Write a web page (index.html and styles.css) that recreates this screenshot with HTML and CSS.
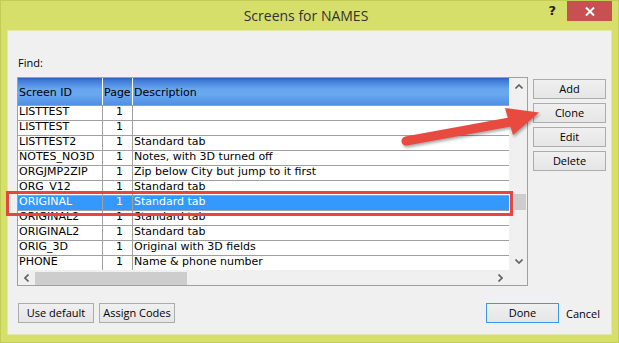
FILE: index.html
```html
<!DOCTYPE html>
<html lang="en">
<head>
  <meta charset="UTF-8">
  <title>Screens for NAMES</title>
  <link rel="stylesheet" href="styles.css">
</head>
<body>

  <div class="window">
    <div class="titlebar">
      <span class="title">Screens for NAMES</span>
      <div class="controls">
        <span class="help">?</span>
        <span class="close">
          <svg width="10" height="9" viewBox="0 0 10 9"><path d="M1 0.5 L9 8.5 M9 0.5 L1 8.5" stroke="#fff" stroke-width="2"/></svg>
        </span>
      </div>
    </div>

    <div class="client">
      <div class="find">Find:</div>

      <div class="main">
        <div class="listbox">
          <div class="table">
            <div class="head">
              <div class="c1">Screen ID</div>
              <div class="c2">Page</div>
              <div class="c3">Description</div>
            </div>
            <div class="row"><div class="c1">LISTTEST</div><div class="c2">1</div><div class="c3"></div></div>
            <div class="row"><div class="c1">LISTTEST</div><div class="c2">1</div><div class="c3"></div></div>
            <div class="row"><div class="c1">LISTTEST2</div><div class="c2">1</div><div class="c3">Standard tab</div></div>
            <div class="row"><div class="c1">NOTES_NO3D</div><div class="c2">1</div><div class="c3">Notes, with 3D turned off</div></div>
            <div class="row"><div class="c1">ORGJMP2ZIP</div><div class="c2">1</div><div class="c3">Zip below City but jump to it first</div></div>
            <div class="row"><div class="c1">ORG_V12</div><div class="c2">1</div><div class="c3">Standard tab</div></div>
            <div class="row sel"><div class="c1">ORIGINAL</div><div class="c2">1</div><div class="c3">Standard tab</div></div>
            <div class="row"><div class="c1">ORIGINAL2</div><div class="c2">1</div><div class="c3">Standard tab</div></div>
            <div class="row"><div class="c1">ORIGINAL2</div><div class="c2">1</div><div class="c3">Standard tab</div></div>
            <div class="row"><div class="c1">ORIG_3D</div><div class="c2">1</div><div class="c3">Original with 3D fields</div></div>
            <div class="row"><div class="c1">PHONE</div><div class="c2">1</div><div class="c3">Name &amp; phone number</div></div>
          </div>

          <div class="vscroll">
            <div class="arrow-v">
              <svg width="8" height="5" viewBox="0 0 8 5"><polyline points="0.5,4.5 4,1 7.5,4.5" fill="none" stroke="#606060" stroke-width="1.6"/></svg>
            </div>
            <div class="vtrack"><div class="vthumb"></div></div>
            <div class="arrow-v">
              <svg width="8" height="5" viewBox="0 0 8 5"><polyline points="0.5,0.5 4,4 7.5,0.5" fill="none" stroke="#606060" stroke-width="1.6"/></svg>
            </div>
          </div>

          <div class="hscroll">
            <div class="arrow-h">
              <svg width="5" height="8" viewBox="0 0 5 8"><polyline points="4.5,0.5 1,4 4.5,7.5" fill="none" stroke="#606060" stroke-width="1.6"/></svg>
            </div>
            <div class="hthumb"></div>
            <div class="htrack"></div>
            <div class="arrow-h">
              <svg width="5" height="8" viewBox="0 0 5 8"><polyline points="0.5,0.5 4,4 0.5,7.5" fill="none" stroke="#606060" stroke-width="1.6"/></svg>
            </div>
          </div>
          <div class="corner"></div>
        </div>

        <div class="side">
          <button class="btn">Add</button>
          <button class="btn">Clone</button>
          <button class="btn">Edit</button>
          <button class="btn">Delete</button>
        </div>
      </div>

      <div class="footer">
        <button class="btn wide">Use default</button>
        <button class="btn wide">Assign Codes</button>
        <button class="btn done">Done</button>
        <button class="flat">Cancel</button>
      </div>
    </div>

    <!-- annotation drawn over the dialog -->
    <svg class="annot" width="619" height="343" viewBox="0 0 619 343">
      <rect x="7.5" y="192.5" width="504" height="22" fill="none" stroke="#e8463d" stroke-width="3"/>
      <g class="arrow">
        <line x1="406" y1="141" x2="510" y2="122" stroke="#e84a3f" stroke-width="9" stroke-linecap="round"/>
        <polygon points="505,108 539,112.5 513,135" fill="#e84a3f"/>
      </g>
    </svg>
  </div>

</body>
</html>
```

FILE: styles.css
```css
* {
  box-sizing: border-box;
}

html, body {
  margin: 0;
  background: #d5df69;
}

body {
  width: 619px;
  height: 343px;
  overflow: hidden;
  font-family: "Open Sans", "Noto Sans", sans-serif;
}

.window {
  position: relative;
  width: 619px;
  height: 343px;
  background: #d5df69;
  box-shadow: inset 0 0 0 1px #c3cd55;
}

/* title bar */
.titlebar {
  height: 30px;
  display: grid;
  grid-template-columns: 1fr auto 1fr;
  padding-right: 7px;
}

.title {
  grid-column: 2;
  font-size: 14px;
  line-height: 31px;
  color: #333;
}

.controls {
  grid-column: 3;
  justify-self: end;
  display: flex;
  align-items: flex-start;
}

.help {
  font-family: "DejaVu Sans", sans-serif;
  font-weight: bold;
  font-size: 13px;
  line-height: 14px;
  color: #222;
  margin-top: 4px;
  margin-right: 11px;
}

.close {
  width: 45px;
  height: 20px;
  margin-top: 1px;
  background: #c75050;
  display: flex;
  align-items: center;
  justify-content: center;
}

/* dialog body */
.client {
  margin: 0 7px;
  height: 305px;
  background: #f0f0f0;
  border: 1px solid #e3e8a6;
  padding: 0 5px 0 9px;
  display: flex;
  flex-direction: column;
}

.find {
  margin-top: 25px;
  height: 14px;
  line-height: 14px;
  font-size: 11px;
  padding-left: 1px;
  color: #000;
}

.main {
  margin-top: 7px;
  display: flex;
  gap: 5px;
}

/* list box */
.listbox {
  width: 511px;
  height: 209px;
  border: 1px solid #a0a0a0;
  background: #fff;
  display: grid;
  grid-template-columns: 491px 18px;
  grid-template-rows: 192px 15px;
}

.table {
  overflow: hidden;
  font-family: "DejaVu Sans", sans-serif;
  font-size: 11px;
  color: #000;
}

.head {
  height: 27px;
  display: flex;
  align-items: stretch;
  background: linear-gradient(to bottom, #2a5cc4 0, #3f78d6 8%, #67a5ee 40%, #6aa8ef 60%, #4f8fe4 100%);
}

.head > div {
  display: flex;
  align-items: center;
  padding-top: 1px;
}

.head .c1,
.head .c2 {
  border-right: 1px solid #fff;
}

.head .c2 {
  justify-content: flex-start;
  padding-left: 1px;
}

.row {
  height: 15px;
  border-top: 1px solid #a0a0a0;
  display: flex;
  line-height: 12px;
  white-space: nowrap;
}

.c1 {
  width: 85px;
  padding-left: 1px;
  flex-shrink: 0;
}

.c2 {
  width: 30px;
  flex-shrink: 0;
}

.c3 {
  flex: 1;
  padding-left: 1px;
}

.row .c1,
.row .c2 {
  border-right: 1px solid #a0a0a0;
}

.row .c2 {
  text-align: center;
  padding-left: 4px;
}

.row.sel {
  background: #3399ff;
  color: #fff;
}

/* scroll bars */
.vscroll {
  grid-column: 2;
  grid-row: 1;
  background: #f0f0f0;
  display: flex;
  flex-direction: column;
}

.arrow-v {
  height: 17px;
  display: flex;
  align-items: center;
  justify-content: center;
  padding-left: 1px;
}

.vtrack {
  flex: 1;
}

.vthumb {
  margin: 99px 1px 0 5px;
  height: 16px;
  background: #cdcdcd;
}

.hscroll {
  grid-column: 1;
  grid-row: 2;
  background: #f0f0f0;
  display: flex;
  align-items: stretch;
}

.arrow-h {
  width: 17px;
  display: flex;
  align-items: center;
  justify-content: center;
}

.hthumb {
  width: 152px;
  margin: 2px 0 0;
  background: #cdcdcd;
}

.htrack {
  flex: 1;
}

.corner {
  grid-column: 2;
  grid-row: 2;
  background: #f0f0f0;
}

/* buttons */
.btn {
  height: 20px;
  padding: 0;
  border: 1px solid #acacac;
  background: linear-gradient(to bottom, #f0f0f0, #e5e5e5);
  font-family: "Open Sans", "Noto Sans", sans-serif;
  font-size: 11px;
  line-height: 18px;
  color: #000;
}

.side {
  width: 73px;
  margin-top: 2px;
  display: flex;
  flex-direction: column;
  gap: 4px;
}

.footer {
  margin-top: 17px;
  padding-left: 1px;
  display: flex;
  gap: 5px;
}

.wide {
  width: 76px;
}

.done {
  width: 73px;
  margin-left: auto;
  border-color: #3c97ea;
}

.flat {
  width: 47px;
  height: 20px;
  margin-left: -5px;
  padding: 0 0 0 7px;
  border: none;
  background: none;
  text-align: left;
  font-family: "Open Sans", "Noto Sans", sans-serif;
  font-size: 11px;
  color: #000;
}

/* red callouts */
.annot {
  position: absolute;
  top: 0;
  left: 0;
  pointer-events: none;
}

.arrow {
  filter: drop-shadow(1px 2px 1.5px rgba(0, 0, 0, 0.35));
}
```
